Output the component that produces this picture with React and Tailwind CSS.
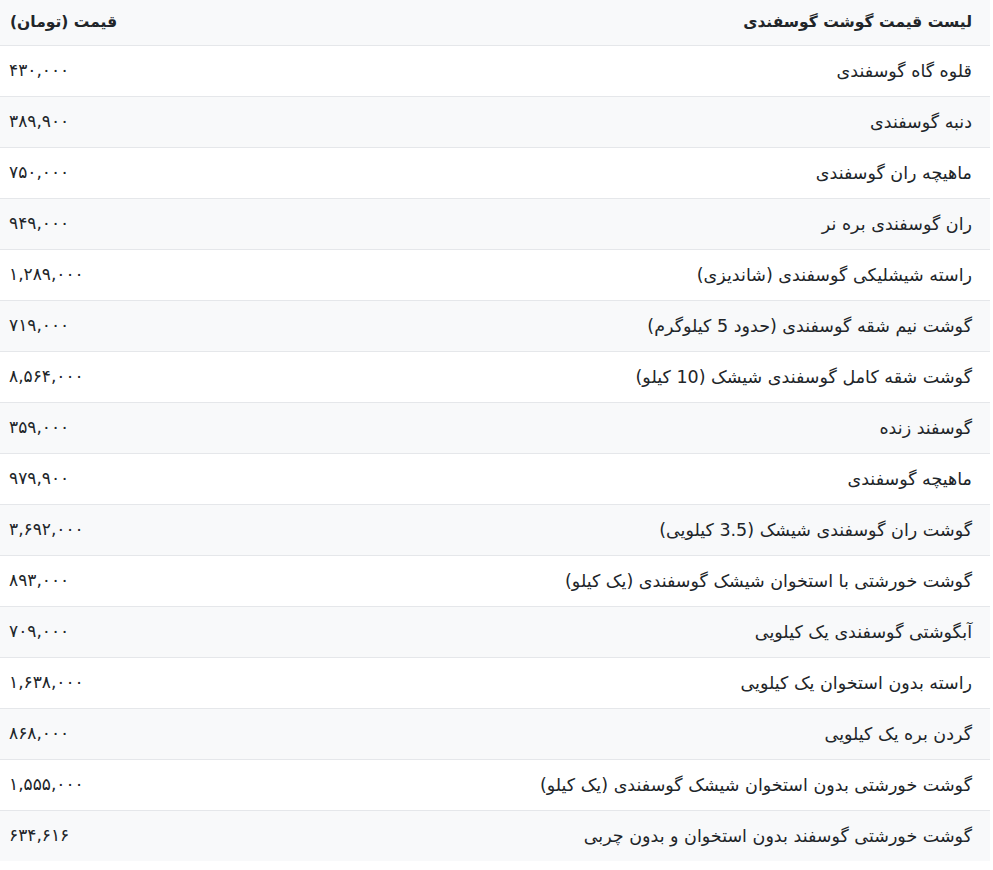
import React from 'react';

const rows = [
  ['قلوه گاه گوسفندی', '۴۳۰,۰۰۰'],
  ['دنبه گوسفندی', '۳۸۹,۹۰۰'],
  ['ماهیچه ران گوسفندی', '۷۵۰,۰۰۰'],
  ['ران گوسفندی بره نر', '۹۴۹,۰۰۰'],
  ['راسته شیشلیکی گوسفندی (شاندیزی)', '۱,۲۸۹,۰۰۰'],
  ['گوشت نیم شقه گوسفندی (حدود 5 کیلوگرم)', '۷۱۹,۰۰۰'],
  ['گوشت شقه کامل گوسفندی شیشک (10 کیلو)', '۸,۵۶۴,۰۰۰'],
  ['گوسفند زنده', '۳۵۹,۰۰۰'],
  ['ماهیچه گوسفندی', '۹۷۹,۹۰۰'],
  ['گوشت ران گوسفندی شیشک (3.5 کیلویی)', '۳,۶۹۲,۰۰۰'],
  ['گوشت خورشتی با استخوان شیشک گوسفندی (یک کیلو)', '۸۹۳,۰۰۰'],
  ['آبگوشتی گوسفندی یک کیلویی', '۷۰۹,۰۰۰'],
  ['راسته بدون استخوان یک کیلویی', '۱,۶۳۸,۰۰۰'],
  ['گردن بره یک کیلویی', '۸۶۸,۰۰۰'],
  ['گوشت خورشتی بدون استخوان شیشک گوسفندی (یک کیلو)', '۱,۵۵۵,۰۰۰'],
  ['گوشت خورشتی گوسفند بدون استخوان و بدون چربی', '۶۳۴,۶۱۶'],
];

export default function App() {
  return (
    <div
      dir="rtl"
      className="w-[993px] min-h-[870px] bg-white text-[#212529]"
      style={{ fontFamily: '"DejaVu Sans", "Noto Sans", sans-serif' }}
    >
      <div className="w-[990px] mr-auto">
        <div className="flex h-[45px] items-center justify-between bg-[#f8f9fa] pr-[18px] pl-[10px] text-[15.5px] font-bold">
          <span>لیست قیمت گوشت گوسفندی</span>
          <span>قیمت (تومان)</span>
        </div>
        {rows.map(([name, price], i) => (
          <div
            key={i}
            className={
              'flex h-[51px] items-center justify-between border-t border-[#e5e7ea] pr-[18px] pl-[9px] ' +
              (i % 2 === 1 ? 'bg-[#f8f9fa]' : 'bg-white')
            }
          >
            <span className="text-[17.5px]">{name}</span>
            <span className="text-[17px]">{price}</span>
          </div>
        ))}
      </div>
    </div>
  );
}
